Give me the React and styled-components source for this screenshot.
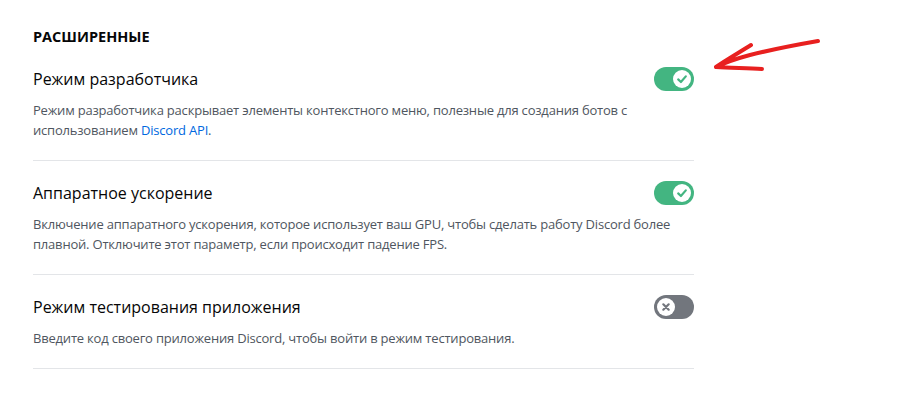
import React from 'react'
import styled, { createGlobalStyle } from 'styled-components'

const GlobalStyle = createGlobalStyle`
  body {
    margin: 0;
    background: #fff;
    font-family: "Open Sans", "Noto Sans", sans-serif;
  }
`

const Page = styled.div`
  position: relative;
  width: 904px;
  height: 413px;
  padding: 27px 0 0 33px;
  box-sizing: border-box;
`

const Section = styled.div`
  width: 661px;
`

const Heading = styled.h2`
  margin: 0 0 20px;
  font-size: 14.5px;
  line-height: 20px;
  font-weight: 700;
  text-transform: uppercase;
  color: #060607;
`

const Item = styled.div`
  display: flex;
  flex-direction: column;
  margin-bottom: 20px;
`

const TitleRow = styled.div`
  display: flex;
  align-items: center;
  justify-content: space-between;
  height: 24px;
`

const Title = styled.div`
  font-size: 16px;
  line-height: 24px;
  color: #060607;
`

const Note = styled.div`
  margin-top: 9px;
  font-size: 13px;
  letter-spacing: -0.2px;
  line-height: 20px;
  color: #4f5660;
`

const Link = styled.a`
  color: #0068e0;
  text-decoration: none;
`

const Divider = styled.div`
  margin-top: 20px;
  height: 1px;
  background: #e3e5e8;
`

const Track = styled.div`
  width: 40px;
  height: 24px;
  border-radius: 12px;
  background: ${(p) => (p.on ? '#43b581' : '#72767d')};
  display: flex;
  align-items: center;
  justify-content: ${(p) => (p.on ? 'flex-end' : 'flex-start')};
  padding: 0 3px;
  box-sizing: border-box;
  flex-shrink: 0;
`

const Knob = styled.div`
  width: 18px;
  height: 18px;
  border-radius: 50%;
  background: #fff;
  display: flex;
  align-items: center;
  justify-content: center;
`

const Arrow = styled.svg`
  position: absolute;
  left: 700px;
  top: 30px;
`

const Toggle = ({ on }) => (
  <Track on={on ? 1 : 0}>
    <Knob>
      {on ? (
        <svg width="14" height="14" viewBox="0 0 14 14">
          <path d="M3.2 7.4 L5.9 10 L10.8 4.4" fill="none" stroke="#43b581" strokeWidth="2.2" strokeLinecap="round" strokeLinejoin="round" />
        </svg>
      ) : (
        <svg width="14" height="14" viewBox="0 0 14 14">
          <path d="M4.3 4.3 L9.7 9.7 M9.7 4.3 L4.3 9.7" fill="none" stroke="#72767d" strokeWidth="2.2" strokeLinecap="round" />
        </svg>
      )}
    </Knob>
  </Track>
)

const Setting = ({ title, on, children }) => (
  <Item>
    <TitleRow>
      <Title>{title}</Title>
      <Toggle on={on} />
    </TitleRow>
    <Note>{children}</Note>
    <Divider />
  </Item>
)

export default function App() {
  return (
    <Page>
      <GlobalStyle />
      <Section>
        <Heading>Расширенные</Heading>
        <Setting title="Режим разработчика" on>
          Режим разработчика раскрывает элементы контекстного меню, полезные для создания ботов с
          использованием <Link href="#">Discord API</Link>.
        </Setting>
        <Setting title="Аппаратное ускорение" on>
          Включение аппаратного ускорения, которое использует ваш GPU, чтобы сделать работу Discord более
          плавной. Отключите этот параметр, если происходит падение FPS.
        </Setting>
        <Setting title="Режим тестирования приложения">
          Введите код своего приложения Discord, чтобы войти в режим тестирования.
        </Setting>
      </Section>
      <Arrow width="130" height="50" viewBox="0 0 130 50">
        <path
          d="M118 11 C95 15 70 20 50 25 C35 29 24 33 16 37 M16 37 C26 30 40 22 51 15 M16 37 C30 38 46 38 62 39"
          fill="none"
          stroke="#e8201f"
          strokeWidth="4"
          strokeLinecap="round"
          strokeLinejoin="round"
        />
      </Arrow>
    </Page>
  )
}
